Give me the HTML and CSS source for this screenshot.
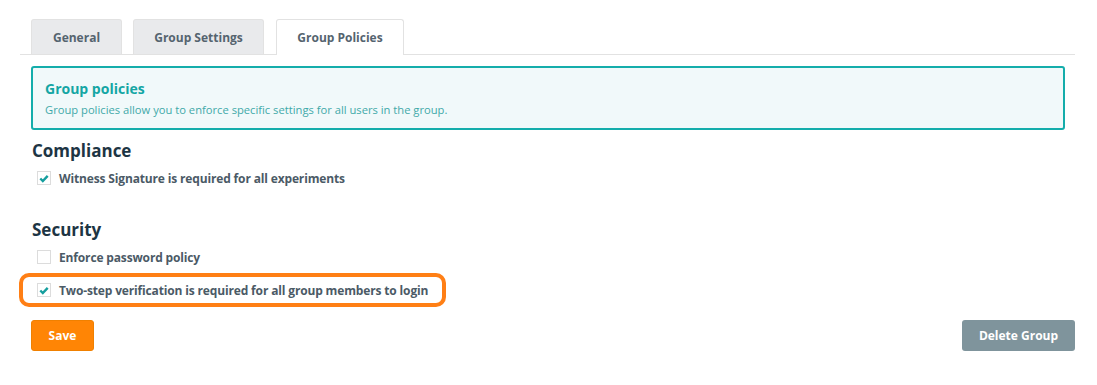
FILE: index.html
```html
<!DOCTYPE html>
<html>
<head>
<meta charset="utf-8">
<link rel="stylesheet" href="styles.css">
</head>
<body>
<div class="page">
  <div class="tabs">
    <div class="tab">General</div>
    <div class="tab">Group Settings</div>
    <div class="tab active">Group Policies</div>
  </div>
  <div class="content">
    <div class="info">
      <div class="info-title">Group policies</div>
      <div class="info-text">Group policies allow you to enforce specific settings for all users in the group.</div>
    </div>
    <h2 class="section">Compliance</h2>
    <div class="row"><span class="cb checked"><svg viewBox="0 0 13 13" width="13" height="13"><path d="M2.5 6.5 L5.2 9.2 L10.5 3.6" fill="none" stroke="#159e9e" stroke-width="2.6"/></svg></span><span class="label">Witness Signature is required for all experiments</span></div>
    <h2 class="section sec2">Security</h2>
    <div class="row"><span class="cb"></span><span class="label">Enforce password policy</span></div>
    <div class="row highlight"><span class="cb checked"><svg viewBox="0 0 13 13" width="13" height="13"><path d="M2.5 6.5 L5.2 9.2 L10.5 3.6" fill="none" stroke="#159e9e" stroke-width="2.6"/></svg></span><span class="label">Two-step verification is required for all group members to login</span></div>
    <div class="actions">
      <button class="btn save">Save</button>
      <button class="btn delete">Delete Group</button>
    </div>
  </div>
</div>
</body>
</html>
```
FILE: styles.css
```css
* { box-sizing: border-box; }
body {
  margin: 0;
  background: #fff;
  font-family: "Open Sans", "Noto Sans", sans-serif;
  color: #4b5a66;
}
.page {
  padding: 19px 22px 0 20px;
}
.tabs {
  display: flex;
  gap: 11px;
  padding-left: 11px;
  border-bottom: 1px solid #e2e2e2;
  height: 36px;
}
.tab {
  width: 91px;
  height: 35px;
  background: #e9eaec;
  border: 1px solid #e2e2e2;
  border-bottom: none;
  border-radius: 3px 3px 0 0;
  font-size: 12px;
  font-weight: 700;
  color: #55646f;
  display: flex;
  align-items: center;
  justify-content: center;
}
.tab:nth-child(2) { width: 131px; }
.tab.active {
  width: 128px;
  height: 36px;
  margin-left: 1px;
  background: #fff;
}
.content {
  padding: 11px 0 0 11px;
}
.info {
  width: 1034px;
  height: 64px;
  border: 2px solid #14adab;
  border-radius: 3px;
  background: #f1f9fa;
  padding: 11px 12px;
}
.info-title {
  font-size: 14px;
  font-weight: 700;
  color: #14a6a4;
  line-height: 20px;
}
.info-text {
  font-size: 11.2px;
  color: #3fa9a9;
  line-height: 18px;
  margin-top: 2px;
}
.section {
  margin: 9px 0 0 1px;
  font-size: 17px;
  font-weight: 700;
  color: #1d3544;
  line-height: 24px;
}
.sec2 { margin-top: 29px; }
.row {
  display: flex;
  align-items: center;
  gap: 8px;
  height: 22px;
  padding-left: 6px;
  margin-top: 4px;
}
.cb {
  width: 14px;
  height: 14px;
  border: 1px solid #dcdcdc;
  background: #fff;
  display: flex;
  align-items: center;
  justify-content: center;
}
.cb svg { display: block; }
.label {
  font-size: 12px;
  font-weight: 700;
  color: #4b5a66;
  letter-spacing: -0.15px;
}
.highlight {
  width: 427px;
  height: 34px;
  margin: 5px 0 0 -12px;
  padding-left: 14px;
  border: 4px solid #ff7f15;
  border-radius: 10px;
}
.actions {
  display: flex;
  justify-content: space-between;
  width: 1044px;
  margin-top: 13px;
}
.btn {
  height: 31px;
  border: none;
  border-radius: 3px;
  color: #fff;
  font-family: inherit;
  font-size: 12px;
  font-weight: 700;
  padding: 0;
}
.save {
  width: 63px;
  background: #ff8505;
  border: 1px solid #f08000;
}
.delete {
  width: 113px;
  background: #7f949c;
}
```
